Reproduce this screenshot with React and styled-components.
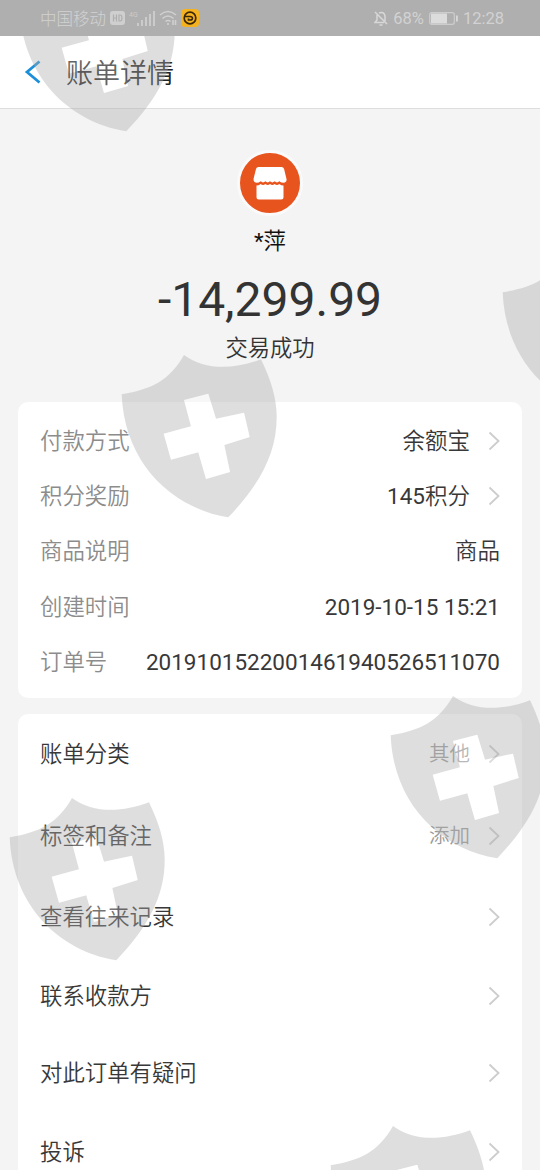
import React from 'react';
import styled, { createGlobalStyle } from 'styled-components';

const GlobalStyle = createGlobalStyle`
  * {
    box-sizing: border-box;
  }
  body {
    margin: 0;
    background: #f4f4f4;
    font-family: Roboto, 'Noto Sans CJK SC', sans-serif;
    font-weight: 400;
    color: #333;
  }
`;

const Page = styled.div`
  position: relative;
  width: 540px;
  height: 1170px;
  overflow: hidden;
  background: #f4f4f4;
`;

const StatusBar = styled.div`
  position: relative;
  z-index: 2;
  display: flex;
  align-items: center;
  justify-content: space-between;
  height: 36px;
  padding: 0 36px 0 40px;
  background: #afafaf;
  color: #d2d2d2;
  font-size: 16.5px;
`;

const StatusGroup = styled.div`
  display: flex;
  align-items: center;
  gap: ${props => props.$gap}px;

  svg {
    display: block;
  }
`;

const Carrier = styled.span`
  font-size: 16.5px;
  font-weight: 300;
`;

const Header = styled.header`
  display: flex;
  align-items: center;
  height: 73px;
  padding-left: 24px;
  background: #fff;
  border-bottom: 1px solid #dedede;
`;

const Title = styled.h1`
  margin: 3px 0 0 24px;
  font-size: 27px;
  font-weight: 350;
  line-height: 40px;
  color: #222;
`;

const Summary = styled.section`
  display: flex;
  flex-direction: column;
  align-items: center;
  height: 293px;
  padding-top: 41px;
`;

const Avatar = styled.div`
  display: flex;
  align-items: center;
  justify-content: center;
  width: 66px;
  height: 66px;
  border: 3px solid #fafafa;
  border-radius: 50%;
  background: #e8541e;
`;

const Payee = styled.div`
  margin-top: 10px;
  font-size: 22.5px;
  line-height: 30px;
  font-weight: 350;
  color: #111;

  span {
    font-weight: 400;
  }
`;

const Amount = styled.div`
  margin-top: 16px;
  font-size: 48px;
  line-height: 56px;
`;

const Status = styled.div`
  margin-top: 5px;
  font-size: 22.3px;
  line-height: 30px;
  font-weight: 350;
`;

const Card = styled.section`
  margin: 0 18px 16px;
  padding: ${props => props.$pad || '0 22px'};
  border-radius: 10px;
  background: #fff;
`;

const Row = styled.div`
  display: flex;
  align-items: center;
  height: ${props => props.$height}px;
  font-size: 22.4px;
  line-height: 30px;

  svg {
    margin-left: 18px;
  }
`;

const Label = styled.span`
  flex: 1;
  font-weight: 350;
  color: ${props => (props.$muted ? '#8c8c8c' : '#383838')};
`;

const Value = styled.span`
  font-weight: ${props => (props.$digits ? 400 : 350)};
  font-size: ${props => (props.$hint ? 20.5 : 22.5)}px;
  color: ${props => (props.$hint ? '#999' : '#383838')};
`;

const Digits = styled.span`
  font-weight: 400;
`;

const Shield = styled.svg`
  position: absolute;
  z-index: 1;
  left: ${props => props.$x}px;
  top: ${props => props.$y}px;
  pointer-events: none;
`;

const details = [
  { label: '付款方式', value: '余额宝', arrow: true },
  { label: '积分奖励', value: <><Digits>145</Digits>积分</>, arrow: true },
  { label: '商品说明', value: '商品' },
  { label: '创建时间', value: '2019-10-15 15:21', digits: true },
  { label: '订单号', value: '2019101522001461940526511070', digits: true },
];

const actions = [
  { label: '账单分类', hint: '其他', height: 81 },
  { label: '标签和备注', hint: '添加', height: 82 },
  { label: '查看往来记录', height: 80 },
  { label: '联系收款方', height: 78 },
  { label: '对此订单有疑问', height: 77 },
  { label: '投诉', height: 80 },
];

const shields = [
  [18, -36],
  [120, 350],
  [501, 248],
  [389, 691],
  [8, 793],
  [329, 1121],
];

function Arrow() {
  return (
    <svg width="12" height="20" viewBox="0 0 12 20" fill="none" stroke="#cdcdcd" strokeWidth="1.8">
      <path d="M1.5 1.5 10.5 10l-9 8.5" />
    </svg>
  );
}

function Watermark({ x, y }) {
  return (
    <Shield $x={x} $y={y} width="160" height="170" viewBox="0 0 160 170">
      <path
        fill="rgba(172,172,172,0.4)"
        fillRule="evenodd"
        d="M1.7 44.3C32 39 49 31 64 5C84 20 113 20 141 9.3C151 30 156.5 48 156.7 66C157 104 139 135 108.3 167.3C50 158 4 111 1.7 44.3Z
          M64 50 71 76.3 43.7 83.7 51 109.7 78.3 102.3 86 129 110 122 104.3 95 129.7 87 124 62.7 96 68.7 88.3 43.7Z"
      />
      <path
        fill="rgba(255,255,255,0.3)"
        d="M64 50 71 76.3 43.7 83.7 51 109.7 78.3 102.3 86 129 110 122 104.3 95 129.7 87 124 62.7 96 68.7 88.3 43.7Z"
      />
    </Shield>
  );
}

function PhoneStatus() {
  return (
    <StatusBar>
      <StatusGroup $gap={4}>
        <Carrier>中国移动</Carrier>
        <svg width="15" height="14" viewBox="0 0 15 14">
          <rect width="15" height="14" rx="3" fill="#cfcfcf" />
          <path d="M3.5 3.5v7M6.5 3.5v7M3.5 7h3M9 4v6h1.2q1.8 0 1.8-3t-1.8-3z" fill="none" stroke="#afafaf" strokeWidth="1.2" />
        </svg>
        <svg width="26" height="16" viewBox="0 0 26 16" fill="#cbcbcb">
          <text x="0" y="7" fontSize="7">4G</text>
          <path d="M8 13h2v3H8zM12 10h2v6h-2zM16 7h2v9h-2zM20 4h2v12h-2zM24 1h2v15h-2z" />
        </svg>
        <svg width="18" height="16" viewBox="0 0 18 16" fill="none" stroke="#d0d0d0" strokeWidth="1.6">
          <path d="M1 5q8-7 16 0M3.5 8.5q5.5-5 11 0M6.5 11.5q2.5-2 5 0" />
          <path d="M9 13v2M14 10v5M16.5 10v5" />
        </svg>
        <svg width="18" height="18" viewBox="0 0 18 18">
          <rect width="18" height="18" rx="4" fill="#f5b21f" />
          <circle cx="9" cy="9" r="5.8" fill="none" stroke="#3a2608" strokeWidth="1.7" />
          <path d="M3.5 7.5H9q2.5 0 2.5 1.7T9 11H7.5V9.5" fill="none" stroke="#3a2608" strokeWidth="1.6" />
        </svg>
      </StatusGroup>
      <StatusGroup $gap={5}>
        <svg width="14" height="16" viewBox="0 0 14 16" fill="none" stroke="#d8d8d8" strokeWidth="1.5">
          <path d="M1 2l12 12M5 3q5-2 6 3v5M3 5v5l-2 2.5h9M5.5 15h3" />
        </svg>
        <span>68%</span>
        <svg width="29" height="13" viewBox="0 0 29 13">
          <rect x=".7" y=".7" width="24.6" height="11.6" rx="2" fill="none" stroke="#cdcdcd" strokeWidth="1.2" />
          <rect x="2" y="1.5" width="16" height="10" fill="#dcdcdc" />
          <path d="M27 3.5h1.8v6H27z" fill="#d8d8d8" />
        </svg>
        <span>12:28</span>
      </StatusGroup>
    </StatusBar>
  );
}

function App() {
  return (
    <Page>
      <GlobalStyle />
      <PhoneStatus />
      <Header>
        <svg width="18" height="24" viewBox="0 0 18 24" fill="none" stroke="#1d8fd8" strokeWidth="2.8">
          <path d="M15.5 1.5 3 12l12.5 10.5" />
        </svg>
        <Title>账单详情</Title>
      </Header>
      <Summary>
        <Avatar>
          <svg width="34" height="34" viewBox="0 0 34 34" fill="#fff">
            <path d="M5.5 1h23q2 0 2.6 2L33.5 13q.5 3.5-3 3.8-2.3 0-4.2-1.5-2.3 2.2-4.7 0-2.3 2.2-4.6 0-2.3 2.2-4.6 0-2.3 2.2-4.7 0-1.9 1.5-4.2 1.5Q.5 16.5.5 13L3 3Q3.5 1 5.5 1Z" />
            <path d="M3.5 19.5q2.3 0 4.2-1.5 2.3 2.2 4.7 0 2.3 2.2 4.6 0 2.3 2.2 4.6 0 2.4 2.2 4.7 0 1.9 1.5 4.2 1.5V31q0 2.5-2.5 2.5H6Q3.5 33.5 3.5 31Z" />
          </svg>
        </Avatar>
        <Payee><span>*</span>萍</Payee>
        <Amount>-14,299.99</Amount>
        <Status>交易成功</Status>
      </Summary>
      <Card $pad="11px 22px 8px">
        {details.map(item => (
          <Row key={item.label} $height={55.4}>
            <Label $muted>{item.label}</Label>
            <Value $digits={item.digits}>{item.value}</Value>
            {item.arrow && <Arrow />}
          </Row>
        ))}
      </Card>
      <Card>
        {actions.map(item => (
          <Row key={item.label} $height={item.height}>
            <Label>{item.label}</Label>
            {item.hint && <Value $hint>{item.hint}</Value>}
            <Arrow />
          </Row>
        ))}
      </Card>
      {shields.map(([x, y]) => (
        <Watermark key={`${x}-${y}`} x={x} y={y} />
      ))}
    </Page>
  );
}

export default App;
